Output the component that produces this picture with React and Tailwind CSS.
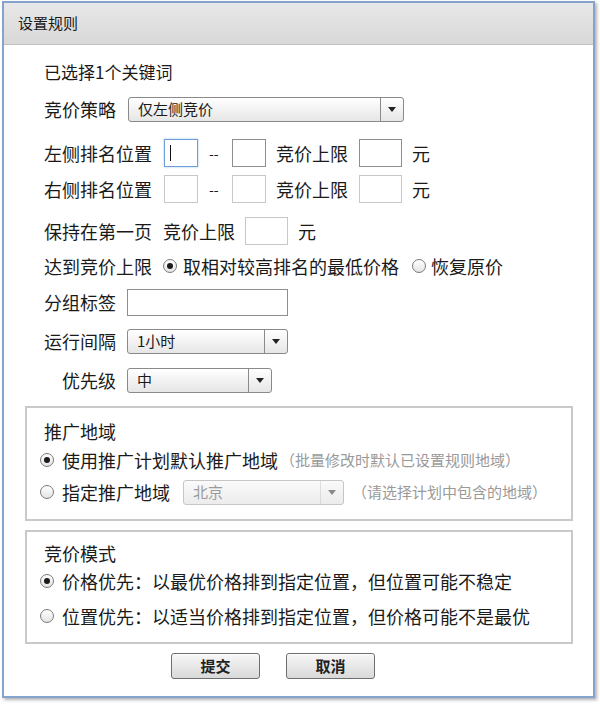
import React from "react";

const FONT = { fontFamily: '"Noto Sans CJK SC", "Noto Sans", sans-serif' };

const Arrow = () => (
  <div className="w-0 h-0 border-l-[4px] border-r-[4px] border-t-[5px] border-l-transparent border-r-transparent border-t-[#222]" />
);

const Select = ({ value, width, disabled }) => (
  <div
    className={`flex items-stretch h-[25px] rounded-[3px] border ${
      disabled
        ? "border-[#c6c6c6] bg-gradient-to-b from-[#fafafa] to-[#ececec] text-[#9a9a9a]"
        : "border-[#8a8a8a] bg-gradient-to-b from-white to-[#e6e6e6] text-[#1a1a1a]"
    }`}
    style={{ width }}
  >
    <div className="flex-1 flex items-center pl-[9px] text-[15px]">{value}</div>
    <div
      className={`w-[23px] flex items-center justify-center border-l ${
        disabled ? "border-[#c6c6c6] opacity-50" : "border-[#8a8a8a]"
      }`}
    >
      <Arrow />
    </div>
  </div>
);

const Input = ({ width, height = 28, focus, light }) => (
  <div
    className={`flex items-center bg-white border ${
      focus
        ? "border-[#6f9fd6] shadow-[0_0_2px_#9cc3ee]"
        : light
        ? "border-[#c8c8c8]"
        : "border-[#8e8e8e]"
    }`}
    style={{ width, height }}
  >
    {focus && <div className="ml-[5px] w-px h-[16px] bg-[#111]" />}
  </div>
);

const Radio = ({ checked }) => (
  <div className="w-[14px] h-[14px] rounded-full border border-[#7a7a7a] bg-gradient-to-b from-white to-[#e4e4e4] flex items-center justify-center shrink-0">
    {checked && <div className="w-[6px] h-[6px] rounded-full bg-[#1a1a1a]" />}
  </div>
);

const Button = ({ children }) => (
  <div className="w-[89px] h-[26px] rounded-[3px] border border-[#6e6e6e] bg-gradient-to-b from-[#f7f7f7] to-[#d9d9d9] flex items-center justify-center text-[15px] font-bold text-[#222] shadow-[inset_0_1px_0_#fff]">
    {children}
  </div>
);

const Row = ({ mt, children, className = "" }) => (
  <div className={`flex items-center h-[30px] ${className}`} style={{ marginTop: mt }}>
    {children}
  </div>
);

export default function App() {
  return (
    <div className="w-[600px] h-[704px] bg-white text-[#1a1a1a]" style={FONT}>
      <div className="ml-[2px] mt-[1px] w-[593px] h-[697px] border-[2px] border-[#86a3cd] bg-white flex flex-col shadow-[2px_2px_3px_rgba(0,0,0,0.3)]">
        <div className="h-[42px] shrink-0 bg-gradient-to-b from-[#e8e8e8] to-[#d8d8d8] border-b border-[#c2c2c2] flex items-center pl-[14px] text-[15px]">
          设置规则
        </div>

        <div className="flex flex-col pl-[40px] text-[18px]">
          <Row mt={12} className="text-[17px]">
            已选择1个关键词
          </Row>

          <Row mt={7}>
            <span>竞价策略</span>
            <div className="ml-[12px]">
              <Select value="仅左侧竞价" width={276} />
            </div>
          </Row>

          <Row mt={14}>
            <span>左侧排名位置</span>
            <div className="ml-[12px]">
              <Input width={34} focus />
            </div>
            <span className="ml-[11px] w-[23px] text-[14px]">--</span>
            <Input width={34} />
            <span className="ml-[10px]">竞价上限</span>
            <div className="ml-[11px]">
              <Input width={43} />
            </div>
            <span className="ml-[10px]">元</span>
          </Row>

          <Row mt={6}>
            <span>右侧排名位置</span>
            <div className="ml-[12px]">
              <Input width={34} light />
            </div>
            <span className="ml-[11px] w-[23px] text-[14px]">--</span>
            <Input width={34} light />
            <span className="ml-[10px]">竞价上限</span>
            <div className="ml-[11px]">
              <Input width={43} light />
            </div>
            <span className="ml-[10px]">元</span>
          </Row>

          <Row mt={12}>
            <span>保持在第一页</span>
            <span className="ml-[11px]">竞价上限</span>
            <div className="ml-[10px]">
              <Input width={43} light />
            </div>
            <span className="ml-[10px]">元</span>
          </Row>

          <Row mt={5}>
            <span>达到竞价上限</span>
            <div className="ml-[11px]">
              <Radio checked />
            </div>
            <span className="ml-[6px]">取相对较高排名的最低价格</span>
            <div className="ml-[13px]">
              <Radio />
            </div>
            <span className="ml-[5px]">恢复原价</span>
          </Row>

          <Row mt={6}>
            <span>分组标签</span>
            <div className="ml-[11px]">
              <Input width={161} height={27} />
            </div>
          </Row>

          <Row mt={9}>
            <span>运行间隔</span>
            <div className="ml-[11px]">
              <Select value="1小时" width={161} />
            </div>
          </Row>

          <Row mt={9}>
            <span className="w-[72px] text-right">优先级</span>
            <div className="ml-[11px]">
              <Select value="中" width={145} />
            </div>
          </Row>
        </div>

        <div className="ml-[21px] mt-[11px] w-[548px] h-[115px] border-[2px] border-[#c9c9c9] flex flex-col pl-[13px] pt-[9px] text-[18px]">
          <div className="h-[28px] flex items-center pl-[4px]">推广地域</div>
          <div className="h-[28px] mt-[1px] flex items-center">
            <Radio checked />
            <span className="ml-[8px]">使用推广计划默认推广地域</span>
            <span className="ml-[2px] text-[15px] text-[#9a9a9a]">（批量修改时默认已设置规则地域）</span>
          </div>
          <div className="h-[28px] mt-[4px] flex items-center">
            <Radio />
            <span className="ml-[8px]">指定推广地域</span>
            <div className="ml-[13px]">
              <Select value="北京" width={161} disabled />
            </div>
            <span className="ml-[8px] text-[15px] text-[#9a9a9a]">（请选择计划中包含的地域）</span>
          </div>
        </div>

        <div className="ml-[21px] mt-[9px] w-[548px] h-[114px] border-[2px] border-[#c9c9c9] flex flex-col pl-[13px] pt-[7px] text-[18px]">
          <div className="h-[28px] flex items-center pl-[4px]">竞价模式</div>
          <div className="h-[28px] flex items-center">
            <Radio checked />
            <span className="ml-[8px]">价格优先：以最优价格排到指定位置，但位置可能不稳定</span>
          </div>
          <div className="h-[28px] mt-[7px] flex items-center">
            <Radio />
            <span className="ml-[8px]">位置优先：以适当价格排到指定位置，但价格可能不是最优</span>
          </div>
        </div>

        <div className="mt-[9px] flex gap-[26px] pl-[167px]">
          <Button>提交</Button>
          <Button>取消</Button>
        </div>
      </div>
    </div>
  );
}
